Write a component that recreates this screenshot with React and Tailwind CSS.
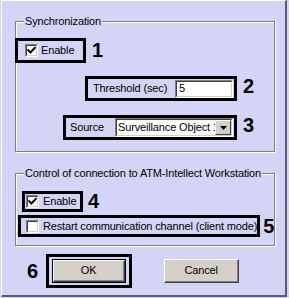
import React from "react";

function Check({ checked }) {
  return (
    <div className="w-[13px] h-[13px] shrink-0 bg-white border-t border-l border-t-[#808080] border-l-[#808080] border-b border-r border-b-white border-r-white">
      <div className="w-full h-full border-t border-l border-t-[#404040] border-l-[#404040] border-b border-r border-b-[#d4d0c8] border-r-[#d4d0c8] flex items-center justify-center">
        {checked && (
          <svg width="9" height="9" viewBox="0 0 9 9">
            <path d="M1.2 4.2 L3.4 6.5 L7.8 1.8" fill="none" stroke="#000" strokeWidth="1.9" strokeLinecap="square" />
          </svg>
        )}
      </div>
    </div>
  );
}

function Num({ children, className = "" }) {
  return (
    <span className={"font-bold text-[20px] leading-[20px] tracking-normal font-['Liberation_Sans',Arial,sans-serif] " + className}>
      {children}
    </span>
  );
}

export default function App() {
  return (
    <div className="w-[289px] h-[298px] bg-[#d4d4f7] overflow-hidden font-['Liberation_Sans',Arial,sans-serif] text-[11px] leading-[13px] tracking-[-0.15px] text-black">
      <div className="ml-[1px] w-[286px] h-[297px] border-l border-t border-l-white border-t-white border-r-2 border-b-2 border-r-[#5c5c6c] border-b-[#5c5c6c] flex flex-col">
        {/* Group 1 */}
        <div className="relative ml-[13px] mt-[20px] w-[260px] h-[131px] border border-[#808080] shadow-[1px_1px_0_#ffffff,inset_1px_1px_0_#ffffff] flex flex-col">
          <span className="absolute left-[8px] top-[-7px] px-[1px] bg-[#d4d4f7]">Synchronization</span>
          <div className="flex items-start mt-[16px] ml-[-1px]">
            <div className="w-[71px] h-[25px] border-[3px] border-black flex items-center pl-[7px] gap-[3px]">
              <Check checked />
              <span>Enable</span>
            </div>
            <Num className="ml-[6px] mt-[2px]">1</Num>
          </div>
          <div className="flex items-start mt-[13px] ml-[69px]">
            <div className="w-[152px] h-[25px] border-[3px] border-black flex items-center pl-[5px]">
              <span className="w-[82px] shrink-0">Threshold (sec)</span>
              <div className="w-[58px] h-[18px] bg-white border-t border-l border-t-[#808080] border-l-[#808080] border-b border-r border-b-white border-r-white">
                <div className="w-full h-full border-t border-l border-t-[#404040] border-l-[#404040] border-b border-r border-b-[#d4d0c8] border-r-[#d4d0c8] pl-[2px] flex items-center">
                  5
                </div>
              </div>
            </div>
            <Num className="ml-[6px]">2</Num>
          </div>
          <div className="flex items-start mt-[14px] ml-[47px]">
            <div className="w-[174px] h-[25px] border-[3px] border-black flex items-center pl-[4px]">
              <span className="w-[45px] shrink-0">Source</span>
              <div className="w-[118px] h-[19px] bg-white border-t border-l border-t-[#808080] border-l-[#808080] border-b border-r border-b-white border-r-white">
                <div className="w-full h-full border-t border-l border-t-[#404040] border-l-[#404040] border-b border-r border-b-[#d4d0c8] border-r-[#d4d0c8] flex items-center">
                  <span className="flex-1 overflow-hidden whitespace-nowrap pl-[1px]">Surveillance Object 1</span>
                  <div className="w-[16px] h-[15px] shrink-0 bg-[#d4d0c8] border-t border-l border-t-white border-l-white border-b border-r border-b-[#404040] border-r-[#404040] flex items-center justify-center">
                    <svg width="7" height="4" viewBox="0 0 7 4">
                      <path d="M0 0 H7 L3.5 4 Z" fill="#000" />
                    </svg>
                  </div>
                </div>
              </div>
            </div>
            <Num className="ml-[6px]">3</Num>
          </div>
        </div>

        {/* Group 2 */}
        <div className="relative ml-[13px] mt-[21px] w-[260px] h-[73px] border border-[#808080] shadow-[1px_1px_0_#ffffff,inset_1px_1px_0_#ffffff] flex flex-col">
          <span className="absolute left-[8px] top-[-7px] px-[1px] bg-[#d4d4f7] whitespace-nowrap">
            Control of connection to ATM-Intellect Workstation
          </span>
          <div className="flex items-start mt-[17px] ml-[6px]">
            <div className="w-[61px] h-[21px] border-[3px] border-black flex items-center pl-[1px] gap-[4px]">
              <Check checked />
              <span>Enable</span>
            </div>
            <Num className="ml-[5px]">4</Num>
          </div>
          <div className="flex items-start mt-[3px] ml-[2px]">
            <div className="w-[250px] h-[22px] border-[3px] border-black flex items-center pl-[5px] gap-[4px] whitespace-nowrap">
              <Check />
              <span>Restart communication channel (client mode)</span>
            </div>
            <Num className="ml-[3px] mt-[1px] bg-[#d4d4f7]">5</Num>
          </div>
        </div>

        {/* Buttons */}
        <div className="flex items-center mt-[8px] ml-[25px]">
          <Num>6</Num>
          <div className="ml-[8px] w-[86px] h-[34px] border-[3px] border-black flex items-center justify-center">
            <div className="w-[74px] h-[24px] border border-black">
              <div className="w-full h-full bg-[#d4d0c8] border-t border-l border-t-white border-l-white border-b border-r border-b-[#404040] border-r-[#404040]">
                <div className="w-full h-full border-b border-r border-b-[#808080] border-r-[#808080] flex items-center justify-center">
                  OK
                </div>
              </div>
            </div>
          </div>
          <div className="ml-[32px] w-[75px] h-[24px] bg-[#d4d0c8] border-t border-l border-t-white border-l-white border-b border-r border-b-[#404040] border-r-[#404040]">
            <div className="w-full h-full border-b border-r border-b-[#808080] border-r-[#808080] flex items-center justify-center">
              Cancel
            </div>
          </div>
        </div>
      </div>
    </div>
  );
}
